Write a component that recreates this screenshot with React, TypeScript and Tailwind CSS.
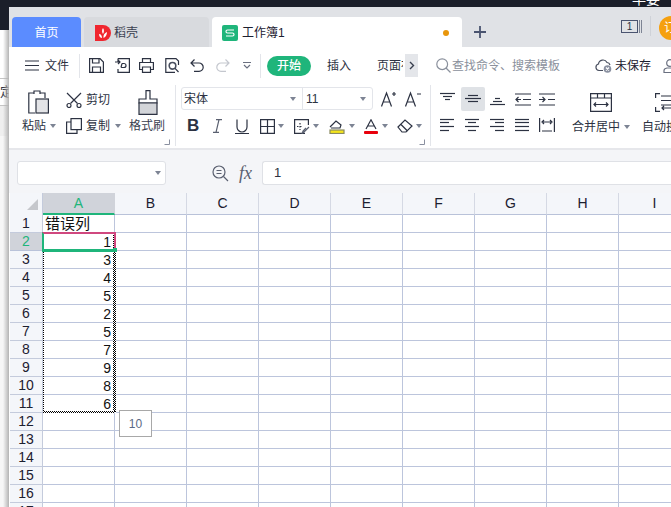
import React from "react";

const font = "font-['Liberation_Sans','Noto_Sans_CJK_SC',sans-serif]";
const cols = ["A", "B", "C", "D", "E", "F", "G", "H", "I", "J"];
const values: Record<number, string> = { 2: "1", 3: "3", 4: "4", 5: "5", 6: "2", 7: "5", 8: "7", 9: "9", 10: "8", 11: "6" };
const rows = Array.from({ length: 17 }, (_, i) => i + 1);

// all toolbar icons share the same stroke setup
const Ico: React.FC<{ w: number; h: number; className?: string; children: React.ReactNode }> = ({ w, h, className, children }) => (
  <svg width={w} height={h} viewBox={`0 0 ${w} ${h}`} fill="none" stroke="#2c3242" strokeWidth="1.2" className={"shrink-0 " + (className ?? "")}>
    {children}
  </svg>
);

const Caret: React.FC<{ className?: string }> = ({ className }) => (
  <span className={"w-0 h-0 shrink-0 border-x-[3px] border-x-transparent border-t-[4px] border-t-[#7d8494] " + (className ?? "")} />
);

const Corner: React.FC<{ className: string }> = ({ className }) => (
  <svg width="6" height="6" viewBox="0 0 6 6" fill="none" stroke="#8a90a0" className={"absolute bottom-[3px] " + className}>
    <path d="M0.5 5.5H5.5V0.5" />
  </svg>
);

const Lines: React.FC<{ rows: [number, number, number][]; w?: number; h?: number }> = ({ rows, w = 16, h = 14 }) => (
  <Ico w={w} h={h}>
    {rows.map(([y, a, b], i) => (
      <path key={i} d={`M${a} ${y + 0.5}H${b}`} />
    ))}
  </Ico>
);

const Divider: React.FC<{ className: string }> = ({ className }) => <div className={"w-px bg-[#e3e5ea] shrink-0 " + className} />;

export default function App() {
  return (
    <div className={"relative w-[671px] h-[507px] overflow-hidden flex bg-white text-[12px] text-[#2c3242] " + font}>
      {/* sliver of the window behind */}
      <div className="relative w-[9px] shrink-0 flex flex-col overflow-hidden">
        <div className="h-[30px] bg-[#1b1f2a]" />
        <div className="h-[48px] bg-white" />
        <div className="h-[28px] border-y border-[#c4c4c4] bg-white text-[13px] leading-[26px] whitespace-nowrap">定</div>
        <div className="h-[30px] bg-[#efefef]" />
        <div className="flex-1 bg-[#f7f7f7]" />
        <div className="absolute top-[30px] bottom-0 right-0 w-[6px] bg-gradient-to-r from-transparent to-[#b4b4b4]" />
      </div>

      <div className="flex-1 min-w-0 flex flex-col">
        <div className="relative h-[7px] shrink-0 bg-[#1b1f2a] overflow-hidden">
          <span className="absolute left-[623px] -top-[9px] text-[14px] leading-[16px] text-white">早要</span>
        </div>

        {/* tab strip */}
        <div className="h-[40px] shrink-0 bg-[#e0e2e6] flex items-end pl-[3px]">
          <div className="w-[69px] h-[30px] pt-px rounded-t-[4px] bg-[#5b8cff] text-white flex items-center justify-center">首页</div>
          <div className="w-[125px] h-[30px] pt-px ml-[3px] rounded-t-[4px] bg-[#d8dade] flex items-center pl-[11px] gap-[3px] text-[#3a4050]">
            <svg width="16" height="16" viewBox="0 0 16 16">
              <path d="M0 0H8A8 8 0 0 1 8 16H0Z" fill="#f0262f" />
              <path d="M4 9C4 12 6 13 7 13C7 11 6 9 4 9ZM8.5 13C11 12 12 9.5 12 7C9.5 8 8 10 8.5 13ZM8 3C6.5 5 7 7.5 8 9C9 7.5 9.5 5 8 3Z" fill="#fff" />
            </svg>
            稻壳
          </div>
          <div className="w-[250px] h-[30px] pt-px ml-[3px] rounded-t-[4px] bg-white flex items-center pl-[10px] gap-[4px]">
            <span className="w-[16px] h-[16px] rounded-[2px] bg-[#1fb57b] flex items-center justify-center">
              <svg width="10" height="8" viewBox="0 0 10 8" fill="none" stroke="#fff" strokeWidth="1.2">
                <path d="M9 1H2.5Q1 1 1 2.5Q1 4 2.5 4H7.5Q9 4 9 5.5Q9 7 7.5 7H1" />
              </svg>
            </span>
            <span className="text-[#1c2030]">工作簿1</span>
            <span className="w-[6px] h-[6px] rounded-full bg-[#e8960c] ml-auto mr-[13px]" />
          </div>
          <svg width="12" height="12" viewBox="0 0 12 12" fill="none" stroke="#4a5470" strokeWidth="1.8" className="ml-[12px] mb-[9px]">
            <path d="M6 0V12M0 6H12" />
          </svg>
          <div className="ml-auto h-[40px] flex items-center pb-[8px] w-[50px] relative">
            <span className="absolute left-0 top-[13px] w-[17px] h-[13px] border border-[#4a5470] text-[10px] leading-[11px] text-center">1</span>
            <span className="absolute left-[18px] top-[13px] w-[1px] h-[13px] bg-[#7d8494]" />
            <span className="absolute left-[20px] top-[13px] w-[1px] h-[13px] bg-[#7d8494]" />
            <span className="absolute left-[29px] top-[9px] w-px h-[20px] bg-[#cfd2d8]" />
          </div>
        </div>

        {/* quick access row */}
        <div className="relative h-[33px] pt-[4px] shrink-0 flex items-center whitespace-nowrap overflow-hidden">
          <Ico w={14} h={11} className="ml-[16px]">
            <path d="M0 1H14M0 5.5H14M0 10H14" />
          </Ico>
          <span className="ml-[6px]">文件</span>
          <Divider className="h-[24px] ml-[10px]" />
          <Ico w={15} h={15} className="ml-[9px]">
            <path d="M.6.6H11L14.4 4V14.4H.6ZM3.5.6V5H10V.6M3.5 14.4V9H11.5V14.4" />
          </Ico>
          <Ico w={15} h={15} className="ml-[11px]">
            <path d="M3 .6H14.4V14.4H3V11M3 4V.6M0 4H5M3 2L5 4L3 6M6 9.5H9A2 2 0 0 0 9 5.5H7M7 5.5L6 9.5" />
          </Ico>
          <Ico w={15} h={15} className="ml-[9px]">
            <path d="M3.5 4.5V.6H11.5V4.5M3.5 11.5H.6V4.5H14.4V11.5H11.5M3.5 9H11.5V14.4H3.5Z" />
          </Ico>
          <Ico w={15} h={15} className="ml-[11px]">
            <path d="M13.5 7V3L11 .6H.8V14.4H10" />
            <circle cx="7.5" cy="7.8" r="3.3" strokeWidth="1.6" stroke="#4a5060" />
            <path d="M10 10.3L13.5 14" />
          </Ico>
          <Ico w={14} h={13} className="ml-[10px]">
            <path d="M4.5 .5L1 4L4.5 7.5M1 4H9A4 4 0 0 1 9 12.4H4" />
          </Ico>
          <svg width="14" height="13" viewBox="0 0 14 13" fill="none" stroke="#c4c7ce" strokeWidth="1.2" className="ml-[12px] shrink-0">
            <path d="M9.5 .5L13 4L9.5 7.5M13 4H5A4 4 0 0 0 5 12.4H10" />
          </svg>
          <Ico w={8} h={7} className="ml-[13px]">
            <path d="M0 .5H8M1 3L4 6L7 3" stroke="#6a7080" />
          </Ico>
          <Divider className="h-[24px] ml-[9px]" />
          <span className="ml-[6px] w-[44px] h-[20px] rounded-full bg-[#1fb57b] text-white font-medium flex items-center justify-center shrink-0">开始</span>
          <span className="ml-[16px]">插入</span>
          <span className="ml-[26px] w-[26px] overflow-hidden shrink-0">页面布局</span>
          <span className="ml-[2px] w-[13px] h-[23px] bg-[#e4e6ea] flex items-center justify-center shrink-0">
            <svg width="6" height="9" viewBox="0 0 6 9" fill="none" stroke="#3a4050" strokeWidth="1.4">
              <path d="M1 1L4.5 4.5L1 8" />
            </svg>
          </span>
          <svg width="15" height="15" viewBox="0 0 15 15" fill="none" stroke="#8a909c" strokeWidth="1.2" className="ml-[18px] shrink-0">
            <circle cx="6.2" cy="6.2" r="5.4" />
            <path d="M10 10L14.5 14.5" />
          </svg>
          <span className="ml-[1px] text-[#8a909c] w-[143px] shrink-0">查找命令、搜索模板</span>
          <svg width="17" height="15" viewBox="0 0 17 15" fill="none" stroke="#4a5060" strokeWidth="1.2" className="shrink-0">
            <path d="M8 12.5H4A3.3 3.3 0 0 1 3.5 6A4.5 4.5 0 0 1 12 4.5A3.5 3.5 0 0 1 15 7" />
            <circle cx="12.5" cy="11" r="3.8" fill="#8a90a0" stroke="none" />
            <path d="M11 9.5L14 12.5M14 9.5L11 12.5" stroke="#fff" />
          </svg>
          <span className="ml-[3px] text-[#1c2030]">未保存</span>
          <svg width="14" height="14" viewBox="0 0 14 14" fill="none" stroke="#6a7080" strokeWidth="1.2" className="ml-[12px] shrink-0">
            <circle cx="7" cy="4" r="3.3" />
            <path d="M1 13.5V11.5Q1 9.5 4 9H10Q13 9.5 13 11.5V13.5Z" />
          </svg>
        </div>

        {/* ribbon */}
        <div className="h-[68px] shrink-0 flex whitespace-nowrap overflow-hidden">
          {/* clipboard */}
          <div className="relative w-[166px] shrink-0 flex">
            <div className="w-[57px] shrink-0 pl-[13px] flex flex-col">
              <Ico w={21} h={24} className="ml-[6px] mt-[10px]">
                <path d="M12 4V1H6V4M6 3H.8V23H7" />
                <path d="M12 3H17V8" />
                <rect x="8" y="9" width="12.4" height="14" fill="#e3e4e7" />
              </Ico>
              <div className="flex items-center h-[18px] mt-[3px] gap-[4px]">
                <span>粘贴</span>
                <Caret />
              </div>
            </div>
            <div className="w-[63px] shrink-0 flex flex-col">
              <div className="flex items-center h-[18px] mt-[11px] gap-[4px]">
                <Ico w={16} h={16}>
                  <path d="M1 1L11.5 11.5M15 1L4.5 11.5" />
                  <circle cx="3" cy="13.5" r="2" />
                  <circle cx="13" cy="13.5" r="2" />
                </Ico>
                <span>剪切</span>
              </div>
              <div className="flex items-center h-[18px] mt-[8px] gap-[4px]">
                <Ico w={16} h={16}>
                  <rect x="5" y=".6" width="10.4" height="11" />
                  <path d="M5 4H.6V15.4H11V11.6" />
                </Ico>
                <span>复制</span>
                <Caret className="ml-[1px]" />
              </div>
            </div>
            <div className="flex-1 flex flex-col items-start">
              <Ico w={20} h={25} className="ml-[9px] mt-[10px]">
                <path d="M8 .6H12V9H19V13H1V9H8Z" />
                <path d="M1 13H19V24.4H1Z" fill="#d3d5d9" />
              </Ico>
              <span className="mt-[2px] leading-[18px] text-[#3a4050]">格式刷</span>
            </div>
            <Corner className="right-[5px]" />
          </div>
          <Divider className="h-[61px] mt-[5px]" />

          {/* font */}
          <div className="relative w-[250px] shrink-0 pl-[5px]">
            <div className="flex items-center mt-[7px] h-[23px]">
              <div className="w-[192px] h-[23px] border border-[#e3e5ea] rounded-[3px] flex items-center">
                <span className="w-[121px] h-full border-r border-[#e3e5ea] flex items-center pl-[2px] pr-[6px]">
                  宋体
                  <Caret className="ml-auto" />
                </span>
                <span className="flex-1 flex items-center pl-[3px] pr-[6px]">
                  11
                  <Caret className="ml-auto" />
                </span>
              </div>
              <Ico w={16} h={16} className="ml-[8px]">
                <path d="M.5 15.5L5.5 2L10.5 15.5M2.5 11H8.5M11 3H15M13 1V5" />
              </Ico>
              <Ico w={16} h={16} className="ml-[8px]">
                <path d="M.5 15.5L5.5 2L10.5 15.5M2.5 11H8.5M12 3H16" />
              </Ico>
            </div>
            <div className="flex items-center h-[18px] mt-[7px] pl-[6px]">
              <span className="w-[13px] text-[17px] leading-[18px] font-bold text-[#2c3242] shrink-0">B</span>
              <Ico w={11} h={14} className="ml-[12px]">
                <path d="M4 .6H10M7 .6L4 13.4M1 13.4H7" stroke="#5a6070" />
              </Ico>
              <Ico w={14} h={15} className="ml-[12px]">
                <path d="M2 .5V8A5 5 0 0 0 12 8V.5M0 14.5H14" />
              </Ico>
              <Ico w={15} h={15} className="ml-[11px]">
                <path d="M.6.6H14.4V14.4H.6ZM7.5.6V14.4M.6 7.5H14.4" />
              </Ico>
              <Caret className="ml-[3px]" />
              <Ico w={16} h={15} className="ml-[10px]">
                <path d="M11 14.4H.6V.6H14.4V6" />
                <path d="M3 7.5H9M6 4V11" strokeDasharray="1.5 1.5" />
                <path d="M9 14L15 8M8 15L9 12L12 9" stroke="#5a6070" />
              </Ico>
              <Caret className="ml-[3px]" />
              <Ico w={16} h={15} className="ml-[10px]">
                <path d="M1 8L7 2L12 6L11 9H2" />
                <rect x="1" y="11" width="14" height="3.5" fill="#f4e51c" stroke="#8a8a60" />
              </Ico>
              <Caret className="ml-[4px]" />
              <Ico w={14} h={15} className="ml-[9px]">
                <path d="M2 10L7 0.8L12 10M4 7H10" />
                <rect x="0" y="12" width="14" height="3" rx="1" fill="#e8000c" stroke="none" />
              </Ico>
              <Caret className="ml-[4px]" />
              <Ico w={16} h={14} className="ml-[9px]">
                <path d="M1 8L8 1L15 7L9 13H5Z" />
                <path d="M4 5.5L10.5 12" />
              </Ico>
              <Caret className="ml-[3px]" />
            </div>
            <Corner className="right-[1px]" />
          </div>
          <Divider className="ml-[4px] h-[61px] mt-[5px]" />

          {/* alignment */}
          <div className="w-[128px] shrink-0 grid grid-cols-[24px_25px_25px_25px_24px] pl-[5px] pt-[7px] grid-rows-[24px_24px] gap-y-[2px] items-center justify-items-center content-start">
            <Lines rows={[[1, 0, 15], [4, 3, 12], [7, 5, 10]]} />
            <span className="w-[24px] h-[24px] rounded-[2px] bg-[#dfe2e6] flex items-center justify-center">
              <Lines rows={[[3, 3, 13], [6, 0, 16], [9, 3, 13]]} />
            </span>
            <Lines rows={[[6, 5, 10], [9, 3, 12], [12, 0, 15]]} />
            <Ico w={16} h={13}>
              <path d="M0 1H16M8 6.5H16M0 12H16M1 6.5H6M3.5 4L1 6.5L3.5 9" />
            </Ico>
            <Ico w={16} h={13}>
              <path d="M0 1H16M9 6.5H16M0 12H16M0 6.5H6M3.5 4L6 6.5L3.5 9" />
            </Ico>
            <Lines rows={[[1, 0, 14], [4, 0, 9], [8, 0, 14], [12, 0, 9]]} />
            <Lines rows={[[1, 0, 14], [4, 3, 11], [8, 0, 14], [12, 3, 11]]} />
            <Lines rows={[[1, 0, 14], [4, 5, 14], [8, 0, 14], [12, 5, 14]]} />
            <Lines rows={[[1, 0, 14], [4, 0, 14], [8, 0, 14], [12, 0, 14]]} />
            <Ico w={16} h={14}>
              <path d="M.6 0V14M15.4 0V14M3 13H13M4 4H12M5 2L3 4L5 6M11 2L13 4L11 6" />
            </Ico>
          </div>

          {/* merge and wrap */}
          <div className="w-[66px] shrink-0 ml-[9px] flex flex-col items-center relative">
            <Ico w={22} h={19} className="mt-[13px]">
              <path d="M.6.6H21.4V18.4H.6ZM.6 5H21.4M7.5.6V5M14.5.6V5M4 11.5H18M6 9.5L4 11.5L6 13.5M16 9.5L18 11.5L16 13.5" />
            </Ico>
            <span className="mt-[6px] leading-[18px] flex items-center gap-[4px]">
              合并居中
              <Caret />
            </span>
          </div>
          <div className="ml-[8px] shrink-0 flex flex-col">
            <Ico w={20} h={19} className="mt-[13px] ml-[13px]">
              <path d="M5 .6H.6V5M.6 14V18.4H5M6 3H20M6 7.5H20M6 12H20M7 15H20M9 13L7 15L9 17" />
            </Ico>
            <span className="mt-[6px] leading-[18px]">自动换行</span>
          </div>
        </div>

        {/* formula bar */}
        <div className="h-[45px] shrink-0 bg-[#f4f5f8] border-t-2 border-[#e6e7eb] flex items-center pl-[8px] pt-[3px]">
          <div className="w-[149px] h-[24px] bg-white border border-[#dfe1e6] rounded-[3px] flex items-center justify-end pr-[4px] shrink-0">
            <Caret />
          </div>
          <svg width="17" height="17" viewBox="0 0 17 17" fill="none" stroke="#5a6070" strokeWidth="1.2" className="ml-[46px] shrink-0">
            <circle cx="7" cy="7" r="6" />
            <path d="M11.5 11.5L16 16M4.5 5.5H9.5M4.5 8.5H9.5" />
          </svg>
          <span className="ml-[10px] w-[23px] font-['Liberation_Serif',serif] italic text-[18px] leading-[20px] text-[#5a6070] shrink-0">fx</span>
          <div className="flex-1 h-[24px] bg-white border border-r-0 border-[#dfe1e6] rounded-l-[3px] flex items-center pl-[11px] text-[13px]">1</div>
        </div>

        {/* sheet */}
        <div className="relative flex-1 min-h-0 overflow-hidden pl-px">
          <div className="flex h-[22px]">
            <div className="w-[33px] shrink-0 bg-[#f4f6fa] border-r border-[#c4cbdc] flex items-end justify-end pr-[4px] pb-[5px]">
              <span className="w-0 h-0 border-l-[11px] border-l-transparent border-b-[11px] border-b-[#c5c7cc]" />
            </div>
            {cols.map((c) => (
              <div
                key={c}
                className={
                  "w-[72px] shrink-0 flex items-center justify-center text-[14px] border-r " +
                  (c === "A"
                    ? "bg-[#d0d3da] text-[#1fb57b] border-b-2 border-[#1fb57b] border-r-[#d0d3da]"
                    : "bg-[#f4f6fa] border-b border-[#b9c2d9] border-r-[#d5d9e4] text-[#1c2030]")
                }
              >
                {c}
              </div>
            ))}
          </div>
          {rows.map((r) => (
            <div key={r} className="flex h-[18px]">
              <div
                className={
                  "w-[33px] shrink-0 flex items-center justify-center text-[14px] border-b border-r " +
                  (r === 2 ? "bg-[#d0d3da] text-[#1fb57b] border-[#b9c2d9]" : "bg-[#f4f6fa] text-[#1c2030] border-[#c4cbdc]")
                }
              >
                {r}
              </div>
              {cols.map((c) => (
                <div
                  key={c}
                  className="w-[72px] shrink-0 border-r border-b border-[#bcc5dc] flex items-center justify-end pr-[3px] pt-px text-[14px] leading-[16px] text-[#111] whitespace-nowrap"
                >
                  {c === "A" && r === 1 ? <span className="mr-auto pl-[2px] text-[15px]">错误列</span> : c === "A" ? values[r] : null}
                </div>
              ))}
            </div>
          ))}

          {/* marching ants round the copied range */}
          <div className="absolute left-[34px] top-[39px] w-px h-[181px] border-l border-dotted border-black" />
          <div className="absolute left-[104px] top-[39px] w-[3px] h-[181px] bg-[repeating-conic-gradient(#000_0_25%,#fff_0_50%)] bg-[length:2px_2px]" />
          <div className="absolute left-[34px] top-[218px] w-[72px] h-[2px] bg-[repeating-conic-gradient(#000_0_25%,#fff_0_50%)] bg-[length:2px_2px]" />

          {/* active cell */}
          <div className="absolute left-[33px] top-[39px] w-[74px] h-[20px] border-2 border-b-[3px] border-[#d0487f] border-l-[#1fb57b] border-b-[#1fb57b]" />
          <div className="absolute left-[104px] top-[55px] w-[4px] h-[4px] bg-[#1fb57b]" />

          {/* count tooltip */}
          <div className="absolute left-[110px] top-[217px] w-[33px] h-[27px] bg-white border border-[#a8a8a8] flex items-center justify-center text-[12px] text-[#5b6a86]">10</div>
        </div>
      </div>

      {/* account badge, cut off by the right edge */}
      <div className="absolute left-[659px] top-[16px] w-[24px] h-[24px] rounded-full bg-[#f5a00f] text-white text-[12px] leading-[24px] pl-[5px]">订</div>
    </div>
  );
}
